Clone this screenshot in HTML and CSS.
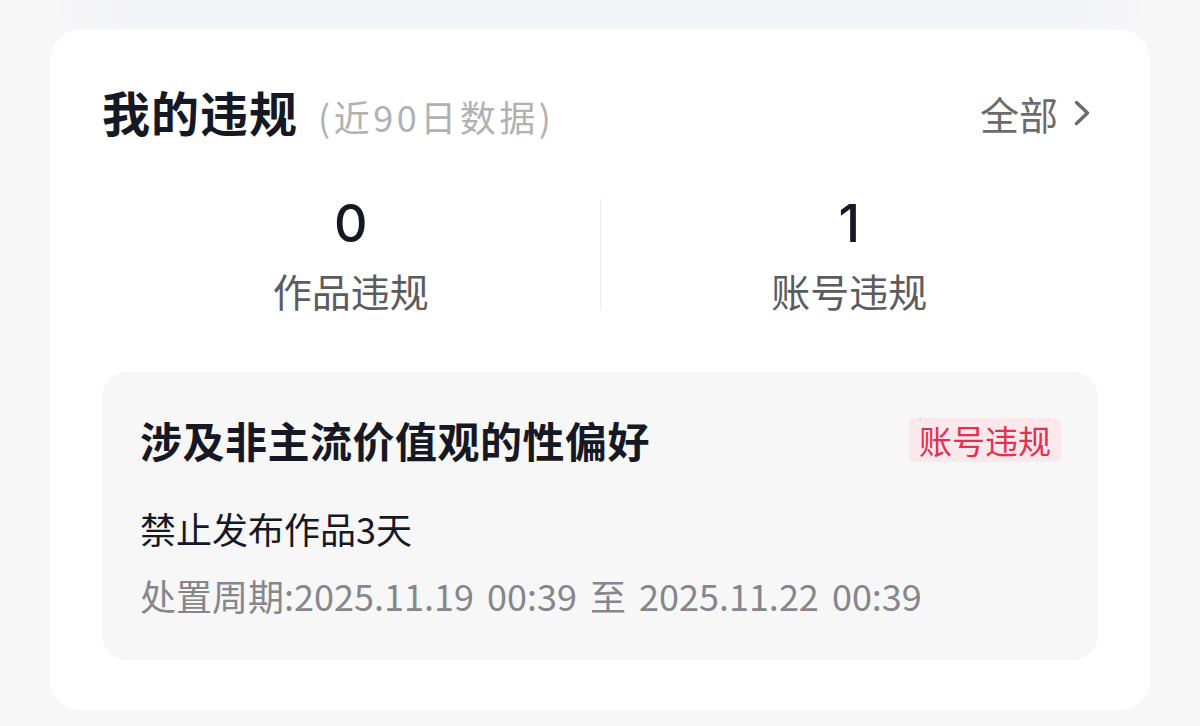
FILE: index.html
```html
<!DOCTYPE html>
<html lang="zh-CN">
<head>
<meta charset="utf-8">
<link rel="stylesheet" href="styles.css">
</head>
<body>
<div class="prev"></div>
<section class="card">
  <header class="head">
    <div class="title-wrap">
      <h1 class="title">我的违规</h1>
      <span class="sub">(近90日数据)</span>
    </div>
    <a class="all">全部<svg class="chev" width="16" height="26" viewBox="0 0 16 26"><polyline points="2.5,2.5 13.5,13 2.5,23.5" fill="none" stroke="#6b6b6e" stroke-width="3.4" stroke-linecap="round" stroke-linejoin="round"/></svg></a>
  </header>
  <div class="stats">
    <div class="stat">
      <div class="num">0</div>
      <div class="label">作品违规</div>
    </div>
    <div class="divider"></div>
    <div class="stat">
      <div class="num">1</div>
      <div class="label">账号违规</div>
    </div>
  </div>
  <div class="item">
    <div class="item-head">
      <div class="item-title">涉及非主流价值观的性偏好</div>
      <span class="tag">账号违规</span>
    </div>
    <div class="item-desc">禁止发布作品3天</div>
    <div class="item-time">处置周期:2025.11.19 00:39 至 2025.11.22 00:39</div>
  </div>
</section>
</body>
</html>
```

FILE: styles.css
```css
* { box-sizing: border-box; margin: 0; padding: 0; }
html, body { width: 1200px; height: 726px; overflow: hidden; }
body {
  background: #f7f7f7;
  font-family: "Noto Sans CJK SC", "Noto Sans", sans-serif;
  padding: 0 50px;
}
.prev {
  height: 27px;
  margin: 0 10px 3px;
  background: linear-gradient(90deg, #f6f6f8, #f3f4f7 8%, #f3f4f7 92%, #f6f6f8);
  border-radius: 0 0 14px 14px;
}
.card {
  background: #ffffff;
  border-radius: 30px;
  padding: 54px 52px 50px;
}
.head {
  display: flex;
  align-items: center;
  justify-content: space-between;
  height: 58px;
}
.title-wrap { display: flex; align-items: baseline; }
.title {
  font-size: 48px;
  font-weight: 700;
  line-height: 58px;
  color: #161823;
  letter-spacing: 1px;
}
.sub {
  font-size: 36px;
  color: #b1b1b4;
  margin-left: 20px;
  letter-spacing: 3.5px;
  line-height: 58px;
}
.all {
  display: flex;
  align-items: center;
  font-size: 39px;
  color: #6b6b6e;
  line-height: 58px;
  margin-right: 8px;
}
.chev { margin-left: 16px; }
.stats {
  display: flex;
  align-items: center;
  margin-top: 52px;
}
.stat {
  flex: 1;
  display: flex;
  flex-direction: column;
  align-items: center;
}
.num {
  font-family: "Inter", "Noto Sans", sans-serif;
  font-size: 52px;
  font-weight: 500;
  line-height: 60px;
  color: #161823;
}
.label {
  font-size: 39px;
  line-height: 48px;
  color: #5c5c60;
  margin-top: 12px;
}
.divider {
  width: 1px;
  height: 111px;
  background: #ececee;
}
.item {
  margin-top: 58px;
  background: #f7f7f8;
  border-radius: 24px;
  padding: 43px 37px 42px 38px;
}
.item-head {
  display: flex;
  align-items: center;
  justify-content: space-between;
  height: 50px;
}
.item-title {
  font-size: 42px;
  font-weight: 700;
  line-height: 50px;
  color: #161823;
  letter-spacing: 0.5px;
}
.tag {
  font-size: 33px;
  line-height: 44px;
  padding: 0 10px;
  color: #e3304f;
  background: #fbe8ec;
  border-radius: 6px;
}
.item-desc {
  margin-top: 40px;
  font-size: 36px;
  line-height: 46px;
  color: #161823;
}
.item-time {
  margin-top: 21px;
  font-size: 36px;
  line-height: 46px;
  color: #86868b;
  word-spacing: 5px;
}
```
